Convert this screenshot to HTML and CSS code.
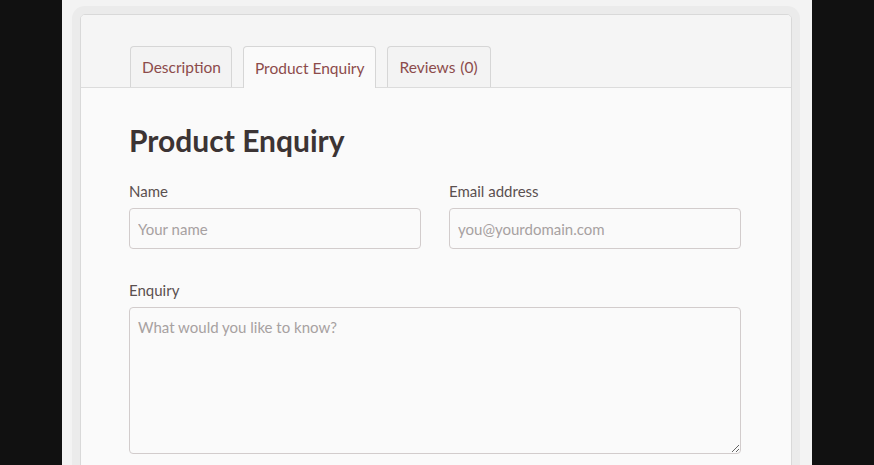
FILE: index.html
```html
<!DOCTYPE html>
<html>
<head>
<meta charset="utf-8">
<link rel="stylesheet" href="styles.css">
</head>
<body>
<div class="page">
  <div class="card">
    <div class="tabs">
      <div class="tab">Description</div>
      <div class="tab active">Product Enquiry</div>
      <div class="tab reviews">Reviews (0)</div>
    </div>
    <div class="content">
      <h2 class="title">Product Enquiry</h2>
      <div class="row">
        <div class="field">
          <label class="label">Name</label>
          <input class="input" type="text" placeholder="Your name">
        </div>
        <div class="field">
          <label class="label">Email address</label>
          <input class="input" type="text" placeholder="you@yourdomain.com">
        </div>
      </div>
      <div class="field wide">
        <label class="label">Enquiry</label>
        <textarea class="textarea" placeholder="What would you like to know?"></textarea>
      </div>
    </div>
  </div>
</div>
</body>
</html>
```
FILE: styles.css
```css
html, body {
  margin: 0;
  padding: 0;
  background: #111111;
  height: 465px;
  overflow: hidden;
  font-family: Lato, "Open Sans", sans-serif;
}
.page {
  margin-left: 62px;
  width: 750px;
  height: 465px;
  background: #f3f3f3;
  padding-top: 14px;
  box-sizing: border-box;
}
.card {
  margin-left: 18px;
  width: 712px;
  height: 470px;
  box-sizing: border-box;
  border: 1px solid #d9d9d9;
  border-radius: 5px;
  background: #fafafa;
  box-shadow: 0 0 0 8px #ebebeb;
  overflow: hidden;
}
.tabs {
  display: flex;
  gap: 11px;
  padding: 0 0 0 49px;
  background: #f5f5f5;
  border-bottom: 1px solid #dcdcdc;
  height: 73px;
  box-sizing: border-box;
  align-items: flex-end;
}
.tab {
  height: 41px;
  box-sizing: border-box;
  padding: 0 10px 0 11px;
  display: flex;
  align-items: center;
  border: 1px solid #d6d6d6;
  border-bottom: none;
  border-radius: 4px 4px 0 0;
  background: #f3f3f3;
  color: #8c4b4b;
  font-size: 15.5px;
}
.tab.reviews {
  padding: 0 12px 0 12px;
  word-spacing: 1px;
}
.tab.active {
  background: #fafafa;
  height: 42px;
  margin-bottom: -1px;
}
.content {
  padding: 33px 50px 0 48px;
}
.title {
  margin: 0;
  font-size: 30px;
  font-weight: 700;
  color: #3c3434;
  line-height: 38px;
}
.row {
  display: flex;
  gap: 28px;
  margin-top: 22px;
}
.field {
  display: flex;
  flex-direction: column;
  flex: 1;
}
.field.wide {
  margin-top: 31px;
}
.label {
  font-size: 15px;
  color: #5a5050;
  line-height: 20px;
  margin-bottom: 7px;
}
.input, .textarea {
  font-family: Lato, "Open Sans", sans-serif;
  font-size: 15px;
  color: #5a5050;
  background: #fafafa;
  border: 1px solid #d2cccc;
  border-radius: 4px;
  box-sizing: border-box;
  padding: 0 8px;
  outline: none;
}
.input {
  height: 41px;
  width: 100%;
}
.textarea {
  height: 147px;
  width: 100%;
  padding-top: 10px;
  resize: vertical;
}
.input::placeholder, .textarea::placeholder {
  color: #a7a1a1;
}
```
